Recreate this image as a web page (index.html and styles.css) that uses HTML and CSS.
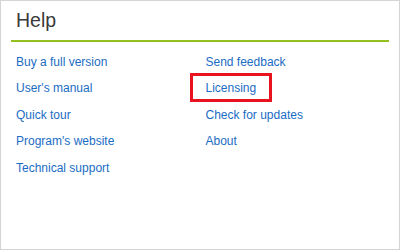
FILE: index.html
```html
<!DOCTYPE html>
<html lang="en">
<head>
<meta charset="utf-8">
<title>Help</title>
<link rel="stylesheet" href="styles.css">
</head>
<body>
<div class="panel">
  <div class="header">Help</div>
  <div class="links">
    <div class="col">
      <a class="link" href="#">Buy a full version</a>
      <a class="link" href="#">User's manual</a>
      <a class="link" href="#">Quick tour</a>
      <a class="link" href="#">Program's website</a>
      <a class="link" href="#">Technical support</a>
    </div>
    <div class="col">
      <a class="link" href="#">Send feedback</a>
      <a class="link highlighted" href="#">Licensing</a>
      <a class="link" href="#">Check for updates</a>
      <a class="link" href="#">About</a>
    </div>
  </div>
</div>
</body>
</html>
```
FILE: styles.css
```css
html, body {
  margin: 0;
  padding: 0;
  background: #ffffff;
}
.panel {
  width: 400px;
  height: 250px;
  box-sizing: border-box;
  border: 1px solid #d4d4d4;
  padding: 0 10px;
  font-family: "Liberation Sans", Arial, sans-serif;
}
.header {
  padding: 8px 5px;
  font-size: 19.5px;
  line-height: 23px;
  color: #3a3a3a;
  border-bottom: 2px solid #93c01f;
}
.links {
  display: grid;
  grid-template-columns: 189.5px auto;
  padding: 6.6px 0 0 5px;
}
.col {
  display: flex;
  flex-direction: column;
  align-items: flex-start;
}
.link {
  font-size: 12px;
  line-height: 26.5px;
  color: #1a6cc4;
  text-decoration: none;
}
.highlighted {
  position: relative;
}
.highlighted::after {
  content: "";
  position: absolute;
  left: -16px;
  right: -16px;
  top: -2px;
  bottom: 0;
  border: 3px solid #e8131f;
}
```
